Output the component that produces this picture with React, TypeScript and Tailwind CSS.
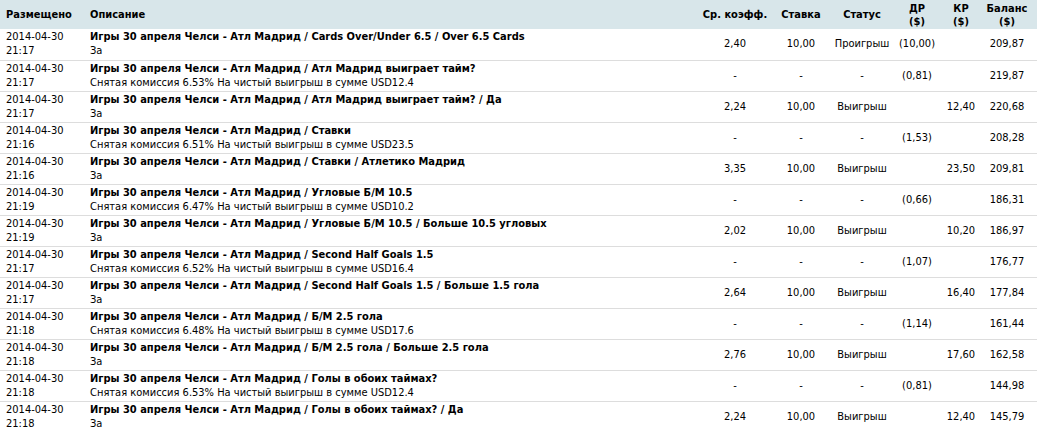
const PREFIX = "Игры 30 апреля Челси - Атл Мадрид / ";

type Bet = {
  time: string;
  title: string;
  note: string;
  odds: string;
  stake: string;
  status: string;
  debit: string;
  credit: string;
  balance: string;
};

const fee = (pct: string, usd: string) =>
  `Снятая комиссия ${pct}% На чистый выигрыш в сумме USD${usd}`;

const bets: Bet[] = [
  { time: "21:17", title: "Cards Over/Under 6.5 / Over 6.5 Cards", note: "За", odds: "2,40", stake: "10,00", status: "Проигрыш", debit: "(10,00)", credit: "", balance: "209,87" },
  { time: "21:17", title: "Атл Мадрид выиграет тайм?", note: fee("6.53", "12.4"), odds: "-", stake: "-", status: "-", debit: "(0,81)", credit: "", balance: "219,87" },
  { time: "21:17", title: "Атл Мадрид выиграет тайм? / Да", note: "За", odds: "2,24", stake: "10,00", status: "Выигрыш", debit: "", credit: "12,40", balance: "220,68" },
  { time: "21:16", title: "Ставки", note: fee("6.51", "23.5"), odds: "-", stake: "-", status: "-", debit: "(1,53)", credit: "", balance: "208,28" },
  { time: "21:16", title: "Ставки / Атлетико Мадрид", note: "За", odds: "3,35", stake: "10,00", status: "Выигрыш", debit: "", credit: "23,50", balance: "209,81" },
  { time: "21:19", title: "Угловые Б/М 10.5", note: fee("6.47", "10.2"), odds: "-", stake: "-", status: "-", debit: "(0,66)", credit: "", balance: "186,31" },
  { time: "21:19", title: "Угловые Б/М 10.5 / Больше 10.5 угловых", note: "За", odds: "2,02", stake: "10,00", status: "Выигрыш", debit: "", credit: "10,20", balance: "186,97" },
  { time: "21:17", title: "Second Half Goals 1.5", note: fee("6.52", "16.4"), odds: "-", stake: "-", status: "-", debit: "(1,07)", credit: "", balance: "176,77" },
  { time: "21:17", title: "Second Half Goals 1.5 / Больше 1.5 гола", note: "За", odds: "2,64", stake: "10,00", status: "Выигрыш", debit: "", credit: "16,40", balance: "177,84" },
  { time: "21:18", title: "Б/М 2.5 гола", note: fee("6.48", "17.6"), odds: "-", stake: "-", status: "-", debit: "(1,14)", credit: "", balance: "161,44" },
  { time: "21:18", title: "Б/М 2.5 гола / Больше 2.5 гола", note: "За", odds: "2,76", stake: "10,00", status: "Выигрыш", debit: "", credit: "17,60", balance: "162,58" },
  { time: "21:18", title: "Голы в обоих таймах?", note: fee("6.53", "12.4"), odds: "-", stake: "-", status: "-", debit: "(0,81)", credit: "", balance: "144,98" },
  { time: "21:18", title: "Голы в обоих таймах? / Да", note: "За", odds: "2,24", stake: "10,00", status: "Выигрыш", debit: "", credit: "12,40", balance: "145,79" },
];

export default function App() {
  return (
    <div className="w-[1037px] h-[432px] overflow-hidden bg-white text-black text-[11px] leading-[14px] font-['DejaVu_Sans_Condensed','DejaVu_Sans',sans-serif]">
      <table className="w-[1037px] table-fixed border-collapse">
        <colgroup>
          <col className="w-[84px]" />
          <col className="w-[616px]" />
          <col className="w-[70px]" />
          <col className="w-[62px]" />
          <col className="w-[60px]" />
          <col className="w-[50px]" />
          <col className="w-[38px]" />
          <col className="w-[57px]" />
        </colgroup>
        <thead>
          <tr className="h-[29px] bg-[#d8e6ea] font-bold leading-[13px]">
            <th className="pl-[6px] text-left">Размещено</th>
            <th className="pl-[6px] text-left">Описание</th>
            <th className="text-center">Ср. коэфф.</th>
            <th className="text-center">Ставка</th>
            <th className="text-center">Статус</th>
            <th className="text-center">ДР<br />($)</th>
            <th className="text-center">КР<br />($)</th>
            <th className="pr-[3px] text-center">Баланс<br />($)</th>
          </tr>
        </thead>
        <tbody>
          {bets.map((b, i) => (
            <tr key={i} className="h-[31px] border-b border-[#dddddd]">
              <td className="pl-[6px] align-middle">
                2014-04-30
                <br />
                {b.time}
              </td>
              <td className="pl-[6px] align-middle">
                <div className="font-bold">{PREFIX + b.title}</div>
                <div>{b.note}</div>
              </td>
              <td className="text-center">{b.odds}</td>
              <td className="text-center">{b.stake}</td>
              <td className="text-center">{b.status}</td>
              <td className="text-center">{b.debit}</td>
              <td className="text-center">{b.credit}</td>
              <td className="pr-[3px] text-center">{b.balance}</td>
            </tr>
          ))}
        </tbody>
      </table>
    </div>
  );
}
